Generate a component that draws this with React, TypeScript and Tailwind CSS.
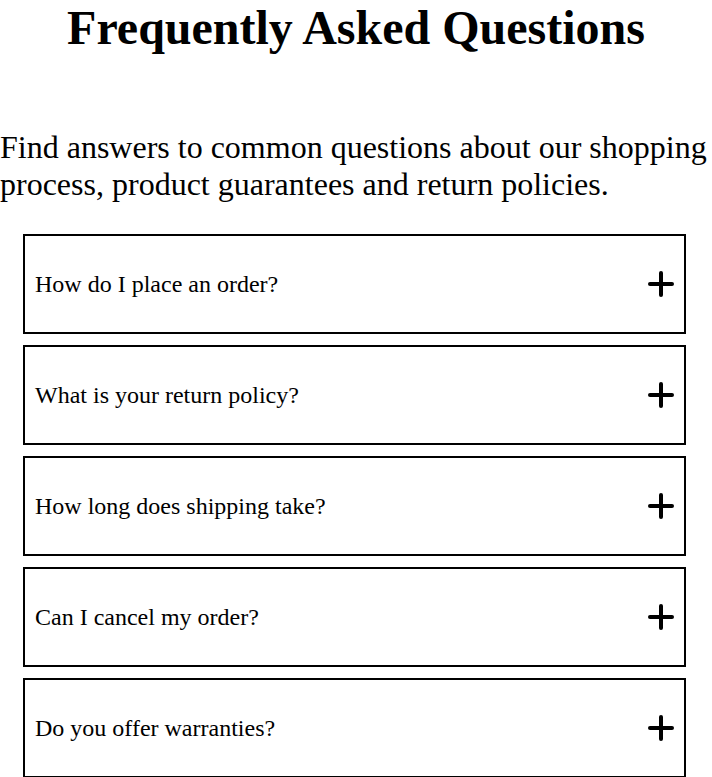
const faqs = [
  "How do I place an order?",
  "What is your return policy?",
  "How long does shipping take?",
  "Can I cancel my order?",
  "Do you offer warranties?",
];

const PlusIcon = () => (
  <svg width="26" height="26" viewBox="0 0 26 26" fill="none" stroke="currentColor" strokeWidth="4" strokeLinecap="round">
    <line x1="13" y1="2" x2="13" y2="24" />
    <line x1="2" y1="13" x2="24" y2="13" />
  </svg>
);

export default function App() {
  return (
    <div className="min-h-screen bg-white text-black font-['Liberation_Serif',serif]">
      <h1 className="text-center text-[48px] font-bold leading-[55px]">Frequently Asked Questions</h1>

      <p className="mt-[74px] text-[32px] leading-[normal]">
        Find answers to common questions about our shopping process, product guarantees and return policies.
      </p>

      <div className="mt-[31px] ml-[23px] w-[663px] flex flex-col gap-[11px]">
        {faqs.map((q) => (
          <div key={q} className="h-[100px] border-2 border-black flex items-center justify-between pl-[10px] pr-[10px]">
            <span className="text-[24px] leading-[normal]">{q}</span>
            <PlusIcon />
          </div>
        ))}
      </div>
    </div>
  );
}
